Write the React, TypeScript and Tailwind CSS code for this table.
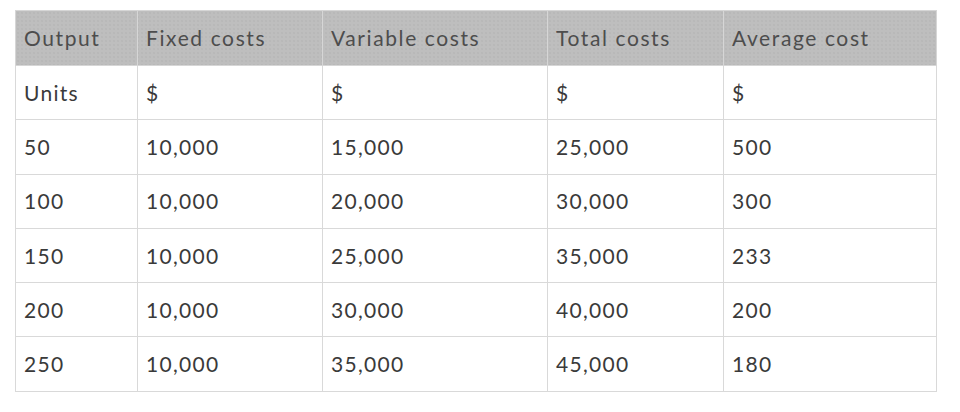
import React from "react";

const rows = [
  ["Units", "$", "$", "$", "$"],
  ["50", "10,000", "15,000", "25,000", "500"],
  ["100", "10,000", "20,000", "30,000", "300"],
  ["150", "10,000", "25,000", "35,000", "233"],
  ["200", "10,000", "30,000", "40,000", "200"],
  ["250", "10,000", "35,000", "45,000", "180"],
];

const headers = ["Output", "Fixed costs", "Variable costs", "Total costs", "Average cost"];
const widths = ["w-[122px]", "w-[185px]", "w-[225px]", "w-[176px]", "w-[213px]"];

export default function App() {
  return (
    <div className="w-[960px] h-[412px] bg-white pt-[10px] pl-[15px] font-['Lato','Liberation_Sans',sans-serif]">
      <table className="table-fixed border-collapse w-[921px] text-[21px] tracking-[1.3px]">
        <colgroup>
          {widths.map((w, i) => (
            <col key={i} className={w} />
          ))}
        </colgroup>
        <thead>
          <tr className="h-[55px] bg-[#bebebe] bg-[radial-gradient(#b2b2b2_0.6px,transparent_0.8px)] bg-[length:4px_4px]">
            {headers.map((h) => (
              <th
                key={h}
                className="border border-[#d6d6d6] text-left font-normal text-[#4d4d4d] pl-[8px] align-middle tracking-[1.6px]"
              >
                {h}
              </th>
            ))}
          </tr>
        </thead>
        <tbody>
          {rows.map((r, ri) => (
            <tr key={ri} className="h-[54.3px]">
              {r.map((c, ci) => (
                <td
                  key={ci}
                  className="border border-[#d9d9d9] text-left text-[#3a3a3a] pl-[8px] align-middle"
                >
                  {c}
                </td>
              ))}
            </tr>
          ))}
        </tbody>
      </table>
    </div>
  );
}
